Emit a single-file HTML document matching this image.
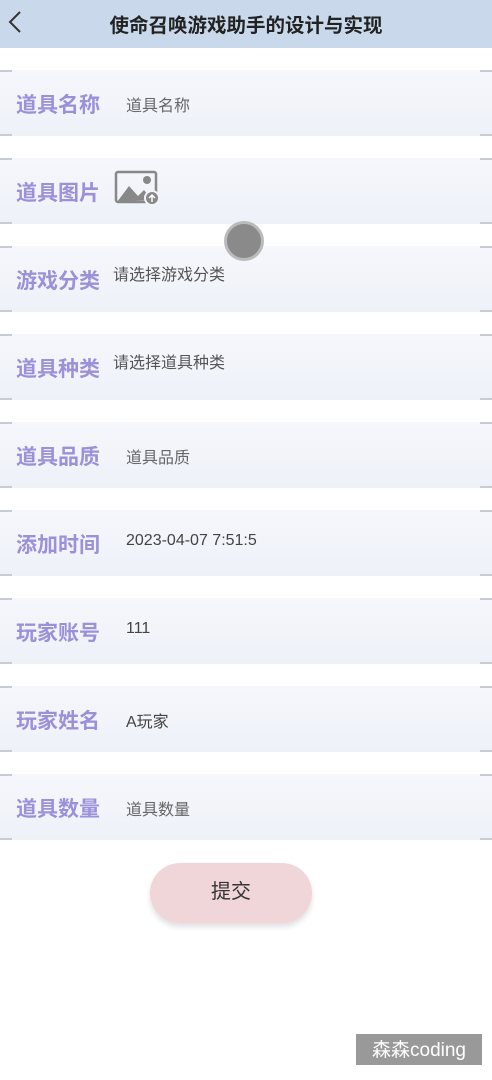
<!DOCTYPE html>
<html><head><meta charset="utf-8"><style>
body{margin:0;width:492px;height:1080px;background:#fff;font-family:"Liberation Sans","Noto Sans CJK SC",sans-serif;position:relative;overflow:hidden}
.hd{position:absolute;left:0;top:0;width:492px;height:48px;background:#c9d9eb}
.hd .t{position:absolute;left:0;right:0;top:9px;text-align:center;font-size:19.5px;font-weight:bold;color:#222}
.row{position:absolute;left:0;width:492px;height:66px;background:linear-gradient(#f6f7fc,#eef1f8)}
.row:before,.row:after{content:"";position:absolute;top:0;width:12px;height:66px;border-top:2px solid #c6cbd6;border-bottom:2px solid #c6cbd6;box-sizing:border-box}
.row:before{left:0}.row:after{right:0}
.l{position:absolute;left:16px;top:19px;font-size:21px;font-weight:bold;color:#9b90d9}
.v{position:absolute;left:126px;top:22px;font-size:16px;color:#666}
.s{left:113px;top:15px;color:#555}
.btn{position:absolute;left:150px;top:863px;width:162px;height:60px;border-radius:30px;background:#f1d6d9;box-shadow:0 4px 6px rgba(0,0,0,.12);text-align:center;line-height:58px;font-size:20px;color:#333}
.wm{position:absolute;left:356px;top:1034px;width:126px;height:31px;background:#999;color:#fff;font-size:19px;line-height:34px;text-align:center}
</style></head><body>
<div class="hd"><svg style="position:absolute;left:6px;top:10px" width="18" height="24"><path d="M14 2 L4 12 L14 22" stroke="#333" stroke-width="2" fill="none"/></svg><div class="t">使命召唤游戏助手的设计与实现</div></div>
<div class="row" style="top:70px"><span class="l">道具名称</span><span class="v">道具名称</span></div>
<div class="row" style="top:158px"><span class="l">道具图片</span>
<svg style="position:absolute;left:114px;top:12px" width="46" height="36" viewBox="0 0 46 36"><rect x="2" y="2" width="40" height="30" rx="2" fill="none" stroke="#888" stroke-width="2.5"/><path d="M3 32 L15 16 L24 26 L30 20 L38 30 Z" fill="#888"/><circle cx="33" cy="10" r="4" fill="#888"/><circle cx="38" cy="28" r="7" fill="#888" stroke="#f3f4fa" stroke-width="2"/><path d="M38 32 V25 M35 28 L38 25 L41 28" stroke="#fff" stroke-width="1.5" fill="none"/></svg></div>
<div class="row" style="top:246px"><span class="l">游戏分类</span><span class="v s">请选择游戏分类</span></div>
<div style="position:absolute;left:224px;top:221px;width:40px;height:40px;border-radius:50%;background:#8a8a8a;border:3px solid #bbb;box-sizing:border-box"></div>
<div class="row" style="top:334px"><span class="l">道具种类</span><span class="v s">请选择道具种类</span></div>
<div class="row" style="top:422px"><span class="l">道具品质</span><span class="v">道具品质</span></div>
<div class="row" style="top:510px"><span class="l">添加时间</span><span class="v" style="color:#444">2023-04-07 7:51:5</span></div>
<div class="row" style="top:598px"><span class="l">玩家账号</span><span class="v" style="color:#444">111</span></div>
<div class="row" style="top:686px"><span class="l">玩家姓名</span><span class="v" style="color:#444">A玩家</span></div>
<div class="row" style="top:774px"><span class="l">道具数量</span><span class="v">道具数量</span></div>
<div class="btn">提交</div>
<div class="wm">森森coding</div>
</body></html>
